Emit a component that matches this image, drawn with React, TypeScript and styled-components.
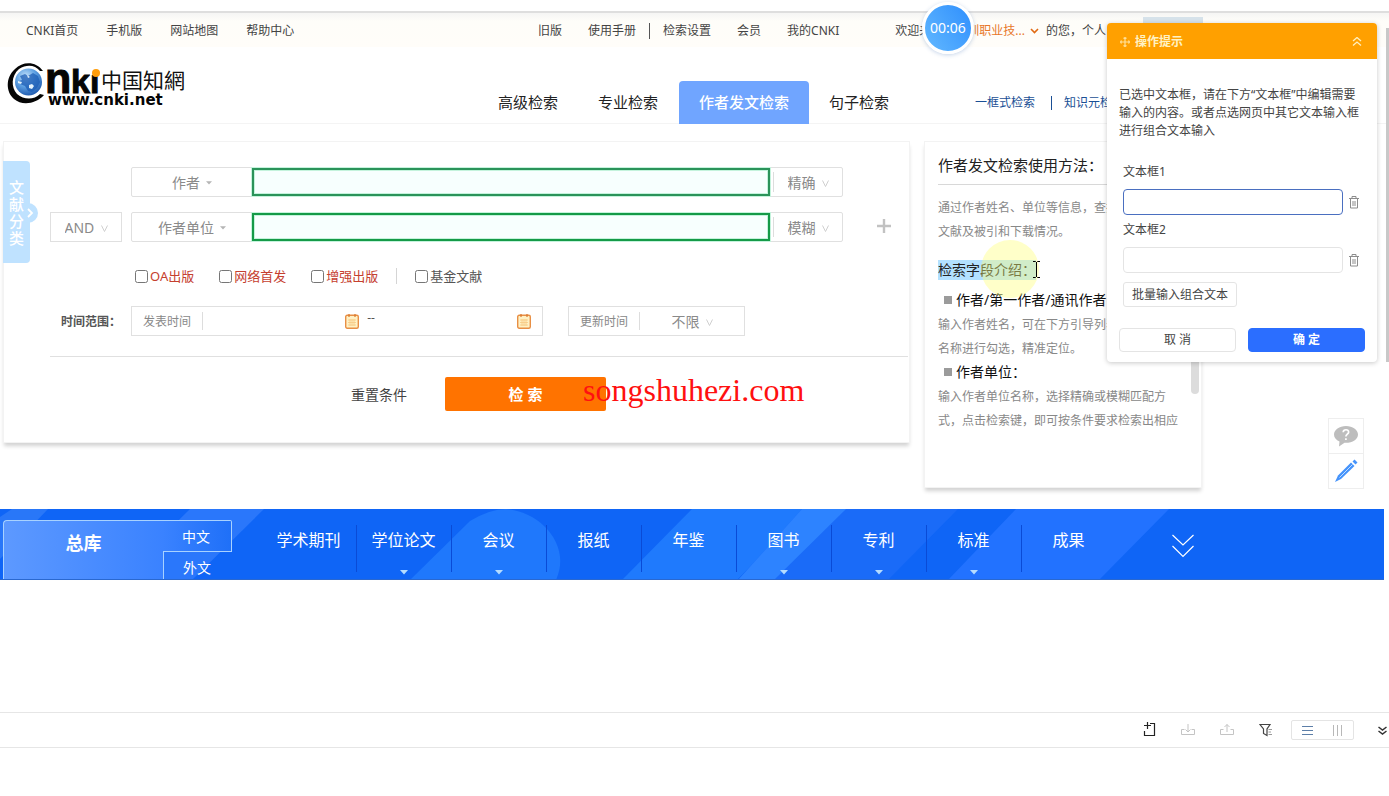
import React from "react";
import styled, { createGlobalStyle, css } from "styled-components";

const GlobalStyle = createGlobalStyle`
  *, *::before, *::after { box-sizing: border-box; }
  body {
    margin: 0;
    background: #fff;
    color: #444;
    font-family: "Noto Sans", "Noto Sans CJK SC", sans-serif;
    font-size: 12px;
    line-height: 18px;
  }
  button, input, select { font: inherit; color: inherit; margin: 0; padding: 0; }
  button { cursor: pointer; background: none; border: 0; }
  a { color: inherit; text-decoration: none; }
  h2, h3, p, ul { margin: 0; padding: 0; font-weight: 400; }
  ul { list-style: none; }
  svg { display: block; flex: none; }
`;

const Page = styled.div`
  position: relative;
  overflow: hidden;
`;

const WindowEdge = styled.div`
  height: 13px;
  border-bottom: 2px solid #dedede;
`;

/* ---------- top bar ---------- */

const TopBar = styled.nav`
  display: flex;
  height: 34px;
  align-items: center;
  padding: 2px 0 0 26px;
  white-space: nowrap;
  background: linear-gradient(#f5f5f4, #fefdf9 8px, #fffdf9);
`;

const TopLinks = styled.div<{ $gap: number; $width?: number }>`
  display: flex;
  flex: none;
  align-items: center;
  gap: ${(p) => p.$gap}px;
  width: ${(p) => (p.$width ? `${p.$width}px` : "auto")};
`;

const Bar = styled.span<{ $height: number; $color?: string }>`
  flex: none;
  width: 1px;
  height: ${(p) => p.$height}px;
  background: ${(p) => p.$color || "#555"};
`;

const Pair = styled.span`
  display: flex;
  align-items: center;
  gap: 13px;
`;

const Welcome = styled.div`
  display: flex;
  align-items: center;
  margin-left: 56px;
`;

const Org = styled.a`
  display: flex;
  align-items: center;
  gap: 5px;
  margin: 0 7px 0 12px;
  color: #e8782a;
`;

/* ---------- header ---------- */

const Header = styled.header`
  display: flex;
  height: 77px;
  align-items: flex-end;
  padding-left: 7px;
  border-bottom: 1px solid #f4f4f4;
  white-space: nowrap;
`;

const LogoLink = styled.a`
  flex: none;
  width: 471px;
  align-self: flex-start;
  padding-top: 13px;
  svg { overflow: visible; }
`;

const Tab = styled.a<{ $active?: boolean }>`
  flex: none;
  margin-bottom: -1px;
  padding: 0 20px;
  font-size: 15px;
  line-height: 43px;
  color: #222;
  ${(p) =>
    p.$active &&
    css`
      margin-left: 1px;
      color: #fff;
      font-weight: 500;
      background: #70a5ff;
      border-radius: 4px 4px 0 0;
    `}
`;

const ModeLinks = styled.div`
  display: flex;
  height: 40px;
  align-items: center;
  gap: 12px;
  margin-left: 66px;
  color: #1a4f95;
  a:first-child { margin-right: 4px; }
`;

/* ---------- main area ---------- */

const Main = styled.main`
  display: grid;
  grid-template-columns: minmax(0, 1fr) 277px;
  gap: 15px;
  align-items: start;
  max-width: 1202px;
  padding: 17px 0 21px 3px;
`;

const Panel = styled.section`
  position: relative;
  border: 1px solid #f3f3f3;
  background: #fff;
  box-shadow: 0 4px 4px -1px rgba(0, 0, 0, 0.18);
`;

const SearchPanel = styled(Panel)`
  height: 302px;
  padding: 25px 0 0 46px;
`;

const Row = styled.div<{ $top?: number }>`
  display: flex;
  align-items: center;
  margin-top: ${(p) => p.$top || 0}px;
`;

const Lead = styled.div`
  flex: none;
  width: 81px;
`;

const Box = styled.div<{ $width?: number; $round?: boolean }>`
  display: flex;
  flex: ${(p) => (p.$width ? "none" : "1 1 0")};
  width: ${(p) => (p.$width ? `${p.$width}px` : "auto")};
  height: 30px;
  align-items: center;
  border: 1px solid #e0e0e0;
  border-radius: ${(p) => (p.$round ? 2 : 0)}px;
`;

const SelectWrap = styled.div<{ $width?: number }>`
  display: flex;
  flex: ${(p) => (p.$width ? "none" : 1)};
  width: ${(p) => (p.$width ? `${p.$width}px` : "auto")};
  align-items: center;
  justify-content: center;
  gap: 6px;
  padding-top: 2px;
  color: #8a8a8a;
  font-size: 14px;
`;

const Select = styled.select`
  appearance: none;
  border: 0;
  background: none;
  outline: none;
  line-height: 24px;
`;

const TermInput = styled.input<{ $color: string }>`
  flex: 1;
  min-width: 0;
  height: 28px;
  margin-right: 3px;
  padding: 0 8px;
  border: 2px solid ${(p) => p.$color};
  outline: none;
  background: #f7fffe;
  box-shadow: 0 0 0 1px #c4f3dc, inset 0 0 0 1px #c4f3dc;
`;

const Tail = styled.div`
  flex: none;
  width: 66px;
  padding: 2px 0 0 34px;
`;

const Check = styled.label<{ $red?: boolean }>`
  display: flex;
  align-items: center;
  gap: 2px;
  font-size: 13px;
  color: ${(p) => (p.$red ? "#c5402f" : "#555")};
  input { width: 13px; height: 13px; }
`;

const Checks = styled.div`
  display: flex;
  height: 22px;
  align-items: center;
  gap: 25px;
  padding-left: 85px;
  margin-top: 23px;
  & > span { margin: 0 -7px; }
`;

const RangeLabel = styled.div`
  padding: 2px 0 0 11px;
  font-weight: 700;
  color: #555;
`;

const BoxLabel = styled.label`
  flex: none;
  padding: 2px 11px 0;
  color: #888;
`;

const DateInput = styled.input`
  flex: 1;
  min-width: 0;
  height: 26px;
  padding: 0 8px;
  border: 0;
  outline: none;
`;

const Dashes = styled.span`
  margin-left: 8px;
  padding-bottom: 6px;
  color: #555;
`;

const DateBox = styled(Box)`
  margin-right: 25px;
  padding-right: 11px;
`;

const Actions = styled.div`
  display: flex;
  align-items: center;
  gap: 38px;
  margin: 20px 1px 0 0;
  padding: 20px 0 0 301px;
  border-top: 1px solid #e0e0e0;
`;

const Reset = styled.button`
  padding-top: 2px;
  font-size: 14px;
  color: #444;
`;

const Submit = styled.button`
  width: 161px;
  height: 34px;
  border-radius: 2px;
  background: #ff7300;
  color: #fff;
  font-size: 15px;
  font-weight: 700;
`;

const Category = styled.button`
  position: absolute;
  z-index: 0;
  left: -1px;
  top: 19px;
  width: 27px;
  height: 102px;
  padding: 2px 6px 0;
  border-radius: 0 4px 4px 0;
  background: #bfe2ff;
  color: #fff;
  font-size: 15px;
  font-weight: 500;
  line-height: 17px;
  &::after {
    content: "";
    position: absolute;
    left: 15px;
    top: 42px;
    width: 20px;
    height: 20px;
    border-radius: 50%;
    background: #bfe2ff;
    z-index: -1;
  }
  svg { position: absolute; left: 24px; top: 47px; }
`;

/* ---------- help panel ---------- */

const Help = styled(Panel)`
  height: 347px;
  margin-left: -1px;
  padding: 0 13px;
  line-height: 24px;
  color: #888;
`;

const HelpTitle = styled.h2`
  margin-bottom: 10px;
  padding-top: 2px;
  height: 43px;
  border-bottom: 1px solid #d8d8d8;
  color: #222;
  font-size: 15px;
  line-height: 42px;
`;

const HelpHeading = styled.h3`
  margin: 17px 0 8px;
  color: #222;
  font-size: 14px;
  line-height: 20px;
  span { display: inline-block; background: #b3e1ff; }
`;

const HelpText = styled.p`
  margin-bottom: -1px;
  padding-top: 1px;
`;

const HelpItem = styled.h3`
  display: flex;
  align-items: center;
  gap: 4px;
  padding-left: 6px;
  color: #111;
  font-size: 14px;
  white-space: nowrap;
  &::before {
    content: "";
    width: 8px;
    height: 8px;
    background: #9b9b9b;
  }
`;

const HelpThumb = styled.span`
  position: absolute;
  right: 2px;
  top: 120px;
  width: 8px;
  height: 132px;
  border-radius: 4px;
  background: #dcdcdc;
`;

/* ---------- database bar ---------- */

const DbBar = styled.nav`
  position: relative;
  display: flex;
  height: 71px;
  margin-right: 5px;
  padding-left: 3px;
  background: #0f65f6;
  border-bottom: 1px solid #2a68cf;
  color: #fff;
  overflow: hidden;
`;

const DbArt = styled.svg`
  position: absolute;
  left: 0;
  top: 0;
`;

const AllDb = styled.a`
  position: relative;
  flex: none;
  width: 160px;
  margin-top: 11px;
  padding-top: 10px;
  border: solid #a8d2ff;
  border-width: 1px 0 0 1px;
  border-radius: 4px 0 0 0;
  background: linear-gradient(90deg, #5d99ff, #3a82ff);
  font-size: 18px;
  font-weight: 700;
  line-height: 24px;
  text-align: center;
`;

const Langs = styled.div`
  position: relative;
  flex: none;
  width: 69px;
  margin-top: 11px;
  text-align: center;
  font-size: 14px;
`;

const Lang = styled.a<{ $active?: boolean }>`
  display: block;
  height: 32px;
  padding-right: 2px;
  line-height: 31px;
  border: solid #a8d2ff;
  border-width: ${(p) => (p.$active ? "1px 1px 1px 0" : "0 0 0 1px")};
  border-radius: 0 ${(p) => (p.$active ? 2 : 0)}px 0 0;
  background: ${(p) => (p.$active ? "linear-gradient(90deg, #3a82ff, #1f70f8)" : "transparent")};
`;

const DbList = styled.ul`
  position: relative;
  display: flex;
  padding-left: 29px;
`;

const DbItem = styled.li`
  display: flex;
  flex-direction: column;
  align-items: center;
  width: 95px;
  padding-top: 19px;
  font-size: 16px;
  line-height: 24px;
  white-space: nowrap;
  & + & {
    background: linear-gradient(#0a4bd6, #0a4bd6) left 0 top 16px / 1px 47px no-repeat;
  }
  svg { margin-top: 18px; }
`;

const More = styled.button`
  position: relative;
  height: 24px;
  margin: 25px 0 0 56px;
`;

/* ---------- bottom tool strip ---------- */

const Tools = styled.div`
  display: flex;
  height: 36px;
  align-items: center;
  justify-content: flex-end;
  gap: 25px;
  margin-top: 132px;
  padding-right: 2px;
  border: solid #e6e6e6;
  border-width: 1px 0;
`;

const ToolButton = styled.button`
  display: flex;
`;

const ViewSwitch = styled.div`
  display: flex;
  width: 63px;
  height: 20px;
  align-items: center;
  justify-content: space-around;
  margin: 0 -1px 0 -7px;
  border: 1px solid #e4e4e4;
  border-radius: 2px;
`;

/* ---------- layers above the page ---------- */

const Watermark = styled.div`
  position: absolute;
  left: 583px;
  top: 370px;
  color: #ff1010;
  font-family: "Liberation Serif", serif;
  font-size: 32px;
  line-height: 40px;
`;

const Timer = styled.div`
  position: absolute;
  left: 922px;
  top: 2px;
  width: 52px;
  height: 52px;
  border: 3px solid #fff;
  border-radius: 50%;
  background: linear-gradient(235deg, #2f8ffd, #62b8ff);
  box-shadow: 0 1px 4px rgba(60, 110, 180, 0.3);
  color: #fff;
  font-size: 14px;
  line-height: 46px;
  text-align: center;
`;

const Spot = styled.div`
  position: absolute;
  left: 981px;
  top: 240px;
  width: 58px;
  height: 58px;
  border-radius: 50%;
  background: rgba(255, 255, 120, 0.4);
`;

const Beam = styled.svg`
  position: absolute;
  left: 1032px;
  top: 261px;
`;

const LoginShade = styled.div`
  position: absolute;
  left: 1143px;
  top: 17px;
  width: 60px;
  height: 20px;
  background: #d6e2ea;
`;

const PageThumb = styled.div`
  position: absolute;
  right: 0;
  top: 28px;
  width: 3px;
  height: 334px;
  background: #c8c8c8;
`;

const SideTools = styled.div`
  position: absolute;
  right: 25px;
  top: 418px;
  display: flex;
  flex-direction: column;
  width: 36px;
  border: 1px solid #eee;
  button {
    display: flex;
    height: 34px;
    align-items: center;
    justify-content: center;
  }
  button + button { height: 35px; border-top: 1px solid #eee; }
`;

const Dialog = styled.aside`
  position: absolute;
  right: 12px;
  top: 23px;
  width: 270px;
  height: 339px;
  border-radius: 4px;
  background: #fff;
  box-shadow: 0 1px 5px rgba(0, 0, 0, 0.22);
  color: #444;
  overflow: hidden;
`;

const DialogHead = styled.div`
  display: flex;
  height: 36px;
  align-items: center;
  gap: 5px;
  padding: 1px 15px 0 13px;
  background: #ffa000;
  color: #fff2c4;
  font-weight: 700;
  button { margin-left: auto; }
`;

const DialogText = styled.p`
  padding: 27px 12px 0;
`;

const Fields = styled.div`
  padding: 17px 16px 0;
`;

const Field = styled.div`
  margin-top: 6px;
  label { display: block; margin-bottom: 8px; }
  div { display: flex; align-items: center; gap: 6px; margin-right: -1px; }
`;

const FieldInput = styled.input<{ $focus?: boolean }>`
  flex: none;
  width: 220px;
  height: 26px;
  padding: 0 8px;
  border: 1px solid ${(p) => (p.$focus ? "#4a6fc0" : "#e4e4e4")};
  border-radius: 4px;
  outline: none;
`;

const PlainButton = styled.button`
  height: 25px;
  margin-top: 9px;
  padding: 0 8px;
  border: 1px solid #e4e4e4;
  border-radius: 3px;
`;

const DialogFoot = styled.div`
  display: grid;
  grid-template-columns: 1fr 1fr;
  gap: 12px;
  padding: 21px 12px 0;
`;

const FootButton = styled.button<{ $primary?: boolean }>`
  height: 24px;
  border: 1px solid ${(p) => (p.$primary ? "#2b6eff" : "#e4e4e4")};
  border-radius: 4px;
  background: ${(p) => (p.$primary ? "#2b6eff" : "#fff")};
  color: ${(p) => (p.$primary ? "#fff" : "#444")};
  font-weight: ${(p) => (p.$primary ? 700 : 400)};
`;

/* ---------- drawings ---------- */

const Logo = () => (
  <svg width="182" height="48" viewBox="0 0 182 48" role="img" aria-label="CNKI">
    <defs>
      <radialGradient id="globe" cx="0.4" cy="0.3" r="0.75">
        <stop offset="0" stopColor="#c5e3fa" />
        <stop offset="0.5" stopColor="#5c9fe2" />
        <stop offset="1" stopColor="#1a55ab" />
      </radialGradient>
    </defs>
    <path d="M36 11C29 1 16 1 8 9C-2 18 -1 32 7 39C15 46 29 44 37 35L33 34C27 40 17 40 10 34C4 27 4 16 12 9C20 4 28 5 33 11Z" fill="#050505" />
    <circle cx="21.500" cy="22" r="13.500" fill="url(#globe)" />
    <path d="M13 16l5-2 3 2 5-3 5 3 2 6-3 6-5 4-4-1-3-5-5-2-1-3 3-1z" fill="#1c5cb4" opacity=".75" />
    <path d="M22 25l3-1 2 2-2 3-3-1zM11 21l4 1-1 2-3-1zM20 15l3 2-2 1z" fill="#e3f1fb" />
    <g fill="#050505" stroke="#050505" strokeWidth="1" fontFamily="Liberation Sans, sans-serif" fontWeight="700">
      <text x="38" y="33" fontSize="43">n</text>
      <text x="64" y="33" fontSize="34">ki</text>
    </g>
    <rect x="83" y="5" width="12" height="10" fill="#fff" />
    <circle cx="89" cy="13" r="4" fill="#ff9d0a" />
    <text x="94" y="28" fontSize="21" fontFamily="Noto Sans CJK SC, sans-serif" fill="#111">中国知網</text>
    <text x="41" y="45" fontSize="15" fontFamily="DejaVu Sans, sans-serif" fontWeight="700" fill="#050505">www.cnki.net</text>
  </svg>
);

const Caret = ({ color = "#b5b5b5", w = 6 }: { color?: string; w?: number }) => (
  <svg width={w} height={w / 2 + 1} viewBox="0 0 8 5"><path d="M0 0h8L4 4.500z" fill={color} /></svg>
);

const Vee = () => (
  <svg width="7" height="7" viewBox="0 0 7 7" fill="none" stroke="#cfcfcf"><path d="M.5.5l3 6 3-6" /></svg>
);

const Calendar = () => (
  <svg width="14" height="15" viewBox="0 0 14 15" fill="none">
    <rect x="0.700" y="1.200" width="12.600" height="13" rx="1.500" fill="#fff1c4" stroke="#e88f45" strokeWidth="1.400" />
    <path d="M3 6h8M3 8.500h8M3 11h8M5 5v7M7 5v7M9 5v7" stroke="#f8c983" strokeWidth=".8" />
    <path d="M4 0v3M10 0v3" stroke="#d9772c" strokeWidth="1.200" />
  </svg>
);

const Trash = () => (
  <svg width="10" height="13" viewBox="0 0 10 13" fill="none" stroke="#8c8c8c">
    <path d="M0 2.500h10M3 2V.5h4V2M1.500 3v9h7V3M4 5v5M6 5v5" />
  </svg>
);

interface DropDownProps {
  text: string;
  id: string;
  width?: number;
  caret?: boolean;
}

const DropDown = ({ text, id, width, caret }: DropDownProps) => (
  <SelectWrap $width={width}>
    <Select id={id} aria-label={text} defaultValue={text}>
      <option>{text}</option>
    </Select>
    {caret ? <Caret /> : <Vee />}
  </SelectWrap>
);

const databases: [string, boolean][] = [
  ["学术期刊", false],
  ["学位论文", true],
  ["会议", true],
  ["报纸", false],
  ["年鉴", false],
  ["图书", true],
  ["专利", true],
  ["标准", true],
  ["成果", false],
];

export default function App() {
  return (
    <Page>
      <GlobalStyle />
      <WindowEdge />
      <TopBar>
        <TopLinks $gap={28} $width={512}>
          <a href="#home">CNKI首页</a>
          <a href="#mobile">手机版</a>
          <a href="#map">网站地图</a>
          <a href="#help">帮助中心</a>
        </TopLinks>
        <TopLinks $gap={26}>
          <a href="#old">旧版</a>
          <Pair>
            <a href="#manual">使用手册</a>
            <Bar $height={16} />
            <a href="#settings">检索设置</a>
          </Pair>
          <a href="#member">会员</a>
          <a href="#mine">我的CNKI</a>
        </TopLinks>
        <Welcome>
          欢迎来自
          <Org href="#org">
            深圳职业技...
            <svg width="9" height="6" viewBox="0 0 9 6" fill="none" stroke="#e06a14" strokeWidth="1.600"><path d="M1 1l3.500 3.500L8 1" /></svg>
          </Org>
          的您，个人
        </Welcome>
      </TopBar>

      <Header>
        <LogoLink href="#home"><Logo /></LogoLink>
        <Tab href="#advanced">高级检索</Tab>
        <Tab href="#professional">专业检索</Tab>
        <Tab href="#author" $active>作者发文检索</Tab>
        <Tab href="#sentence">句子检索</Tab>
        <ModeLinks>
          <a href="#simple">一框式检索</a>
          <Bar $height={14} $color="#1a4f95" />
          <a href="#element">知识元检索</a>
        </ModeLinks>
      </Header>

      <Main>
        <SearchPanel>
          <Row>
            <Lead />
            <Box $round>
              <DropDown text="作者" id="field-1" width={120} caret />
              <TermInput $color="#2b935a" aria-label="作者" />
              <Bar $height={20} $color="#ddd" />
              <DropDown text="精确" id="match-1" width={68} />
            </Box>
            <Tail />
          </Row>
          <Row $top={15}>
            <Lead>
              <Box $width={72}><DropDown text="AND" id="logic" /></Box>
            </Lead>
            <Box $round>
              <DropDown text="作者单位" id="field-2" width={120} caret />
              <TermInput $color="#159a48" aria-label="作者单位" />
              <Bar $height={20} $color="#ddd" />
              <DropDown text="模糊" id="match-2" width={68} />
            </Box>
            <Tail>
              <button aria-label="添加一行">
                <svg width="14" height="14" viewBox="0 0 14 14" stroke="#c2c2c2" strokeWidth="2.400"><path d="M7 0v14M0 7h14" /></svg>
              </button>
            </Tail>
          </Row>

          <Checks>
            <Check $red><input type="checkbox" />OA出版</Check>
            <Check $red><input type="checkbox" />网络首发</Check>
            <Check $red><input type="checkbox" />增强出版</Check>
            <Bar $height={16} $color="#d5d5d5" />
            <Check><input type="checkbox" />基金文献</Check>
          </Checks>

          <Row $top={19}>
            <Lead><RangeLabel>时间范围：</RangeLabel></Lead>
            <DateBox $width={412}>
              <BoxLabel htmlFor="from">发表时间</BoxLabel>
              <Bar $height={18} $color="#ddd" />
              <DateInput id="from" />
              <Calendar />
              <Dashes>--</Dashes>
              <DateInput aria-label="结束时间" />
              <Calendar />
            </DateBox>
            <Box $width={177}>
              <BoxLabel htmlFor="update">更新时间</BoxLabel>
              <Bar $height={18} $color="#ddd" />
              <DropDown text="不限" id="update" />
            </Box>
          </Row>

          <Actions>
            <Reset>重置条件</Reset>
            <Submit>检 索</Submit>
          </Actions>

          <Category>
            文献分类
            <svg width="7" height="10" viewBox="0 0 7 10" fill="none" stroke="#fff" strokeWidth="1.800"><path d="M1 1l4 4-4 4" /></svg>
          </Category>
        </SearchPanel>

        <Help>
          <HelpTitle>作者发文检索使用方法：</HelpTitle>
          <HelpText>通过作者姓名、单位等信息，查找作者发表的文献及被引和下载情况。</HelpText>
          <HelpHeading><span>检索字段介绍：</span></HelpHeading>
          <HelpItem>作者/第一作者/通讯作者：</HelpItem>
          <HelpText>输入作者姓名，可在下方引导列表中根据机构名称进行勾选，精准定位。</HelpText>
          <HelpItem>作者单位：</HelpItem>
          <HelpText>输入作者单位名称，选择精确或模糊匹配方式，点击检索键，即可按条件要求检索出相应</HelpText>
          <HelpThumb />
        </Help>
      </Main>

      <DbBar>
        <DbArt width="1384" height="71" viewBox="0 0 1384 71">
          <path d="M12 0h36L0 50V8z" fill="#3a84fa" opacity=".6" />
          <path d="M190 0h74l-72 71h-74z" fill="#2a77fb" />
          <path d="M410 71L470 12Q490 0 506 0C540 2 572 36 556 71z" fill="#1f78fc" />
          <path d="M692 0h115l-70 71H622z" fill="#1f7afd" />
          <path d="M802 0h156l-70 71H738z" fill="#1a6bf8" />
          <path d="M802 0h44l-72 71h-36z" fill="#2d83ff" />
          <path d="M1016 0h153l-70 71H948z" fill="#2272ff" />
        </DbArt>
        <AllDb href="#all">总库</AllDb>
        <Langs>
          <Lang href="#zh" $active>中文</Lang>
          <Lang href="#foreign">外文</Lang>
        </Langs>
        <DbList>
          {databases.map(([name, more]) => (
            <DbItem key={name}>
              <a href={`#${name}`}>{name}</a>
              {more && <Caret color="#b5dcff" w={8} />}
            </DbItem>
          ))}
        </DbList>
        <More aria-label="更多">
          <svg width="22" height="24" viewBox="0 0 22 24" fill="none" stroke="#fff" strokeWidth="1.200"><path d="M.5 1L11 11 21.500 1M.5 12L11 22.500 21.500 12" /></svg>
        </More>
      </DbBar>

      <Tools>
        <ToolButton aria-label="新建">
          <svg width="14" height="16" viewBox="0 0 14 16" fill="none" stroke="#222" strokeWidth="1.200"><path d="M8 1.500h4.500v12h-10V9M5.500 0v7M2 3.500h7" /></svg>
        </ToolButton>
        <ToolButton aria-label="导入">
          <svg width="14" height="14" viewBox="0 0 14 14" fill="none" stroke="#c4c4c4"><path d="M3.500 6.500h-3v5h13v-5h-3M7 1v8M4.500 6.500L7 9l2.500-2.500" /></svg>
        </ToolButton>
        <ToolButton aria-label="导出">
          <svg width="14" height="14" viewBox="0 0 14 14" fill="none" stroke="#c4c4c4"><path d="M3.500 6.500h-3v5h13v-5h-3M7 9V1.500M4.500 4L7 1.500 9.500 4" /></svg>
        </ToolButton>
        <ToolButton aria-label="筛选">
          <svg width="14" height="14" viewBox="0 0 14 14" fill="none" stroke="#444" strokeWidth="1.200"><path d="M1 1.500h10L8 6v6.500L4.500 10.500V6z" /><path d="M9.500 6.500H13M9.500 9H12M9.500 11.500H13" stroke="#999" /></svg>
        </ToolButton>
        <ViewSwitch>
          <ToolButton aria-label="列表视图">
            <svg width="11" height="11" viewBox="0 0 11 11" stroke="#5d7fa8"><path d="M0 1.500h11M0 5.500h11M0 9.500h11" /></svg>
          </ToolButton>
          <ToolButton aria-label="分栏视图">
            <svg width="11" height="11" viewBox="0 0 11 11" stroke="#b8b8b8"><path d="M1.500 0v11M5.500 0v11M9.500 0v11" /></svg>
          </ToolButton>
        </ViewSwitch>
        <ToolButton aria-label="收起">
          <svg width="9" height="9" viewBox="0 0 9 9" fill="none" stroke="#333" strokeWidth="1.500"><path d="M.5 1l4 3 4-3M.5 5l4 3 4-3" /></svg>
        </ToolButton>
      </Tools>

      <LoginShade />
      <Spot />
      <Beam width="9" height="17" viewBox="0 0 9 17" fill="none" stroke="#000"><path d="M1 .5h2.500l1 1 1-1H8M1 16.500h2.500l1-1 1 1H8M4.500 1v15" /></Beam>
      <Watermark>songshuhezi.com</Watermark>
      <Timer>00:06</Timer>
      <PageThumb />

      <SideTools>
        <button aria-label="帮助">
          <svg width="24" height="21" viewBox="0 0 24 21">
            <path d="M12 0C5.400 0 0 3.700 0 8.500c0 3 2 5.500 5.500 7L5 20.500l5.500-3.700C18 17.300 24 13.500 24 8.500 24 3.700 18.600 0 12 0z" fill="#bdbdbd" />
            <path d="M9.200 6.200C9.400 2.800 15 3 14.600 6.300c-.3 1.800-2.700 2-2.700 4.200M11.900 12.300v1.700" stroke="#fff" strokeWidth="1.700" fill="none" />
          </svg>
        </button>
        <button aria-label="反馈">
          <svg width="24" height="24" viewBox="0 0 24 24">
            <path d="M17 3.500l3.500 3.500L7 20l-6 3 3-6.500z" fill="#4593fb" />
            <path d="M18.500 2.500L20.500.5l3 3-2 2z" fill="#4593fb" />
            <path d="M5.500 18.500L18.500 5.500" stroke="#cfe5ff" strokeWidth=".9" />
          </svg>
        </button>
      </SideTools>

      <Dialog>
        <DialogHead>
          <svg width="10" height="10" viewBox="0 0 10 10" fill="none" stroke="#ffe09a" strokeWidth="1.200"><path d="M5 0v10M0 5h10M3.500 1.500L5 .5l1.500 1M3.500 8.500L5 9.500l1.500-1M1.500 3.500L.5 5l1 1.500M8.500 3.500l1 1.500-1 1.500" /></svg>
          操作提示
          <button aria-label="收起">
            <svg width="10" height="9" viewBox="0 0 10 9" fill="none" stroke="#fff0c0" strokeWidth="1.300"><path d="M1 4l4-3.500L9 4M1 8.500L5 5l4 3.500" /></svg>
          </button>
        </DialogHead>
        <DialogText>已选中文本框，请在下方“文本框”中编辑需要输入的内容。或者点选网页中其它文本输入框进行组合文本输入</DialogText>
        <Fields>
          <Field>
            <label htmlFor="box-1">文本框1</label>
            <div><FieldInput id="box-1" $focus /><button aria-label="删除文本框1"><Trash /></button></div>
          </Field>
          <Field>
            <label htmlFor="box-2">文本框2</label>
            <div><FieldInput id="box-2" /><button aria-label="删除文本框2"><Trash /></button></div>
          </Field>
          <PlainButton>批量输入组合文本</PlainButton>
        </Fields>
        <DialogFoot>
          <FootButton>取 消</FootButton>
          <FootButton $primary>确 定</FootButton>
        </DialogFoot>
      </Dialog>
    </Page>
  );
}
